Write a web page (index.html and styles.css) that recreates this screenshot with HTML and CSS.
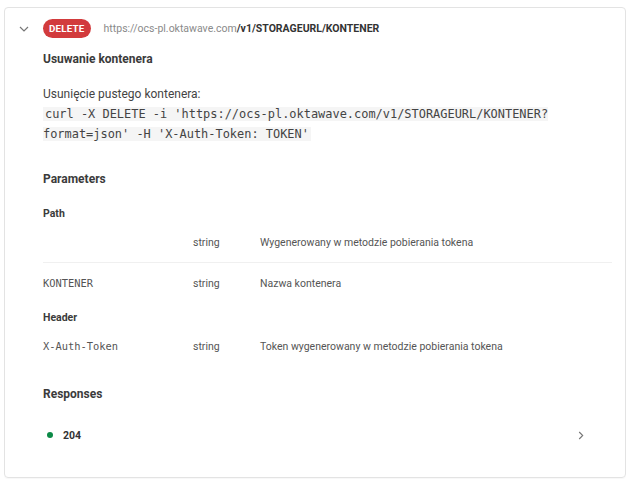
FILE: index.html
```html
<!DOCTYPE html>
<html>
<head>
<meta charset="utf-8">
<link rel="stylesheet" href="styles.css">
</head>
<body>
<div class="card">
  <div class="head">
    <svg class="chev-down" width="10" height="6" viewBox="0 0 10 6"><path d="M1 1l4 4 4-4" fill="none" stroke="#777" stroke-width="1.2"/></svg>
    <span class="badge">DELETE</span>
    <span class="url"><span class="host">https://ocs-pl.oktawave.com</span><span class="path">/v1/STORAGEURL/KONTENER</span></span>
  </div>
  <div class="body">
    <div class="title">Usuwanie kontenera</div>
    <div class="desc">
      <p class="lead">Usunięcie pustego kontenera:</p>
      <code class="code">curl -X DELETE -i 'https://ocs-pl.oktawave.com/v1/STORAGEURL/KONTENER?<br>format=json' -H 'X-Auth-Token: TOKEN'</code>
    </div>
    <h3 class="section">Parameters</h3>
    <div class="group">Path</div>
    <div class="row sep"><span class="name"></span><span class="type">string</span><span class="pdesc">Wygenerowany w metodzie pobierania tokena</span></div>
    <div class="row after-sep"><span class="name">KONTENER</span><span class="type">string</span><span class="pdesc">Nazwa kontenera</span></div>
    <div class="group hdr">Header</div>
    <div class="row"><span class="name">X-Auth-Token</span><span class="type">string</span><span class="pdesc">Token wygenerowany w metodzie pobierania tokena</span></div>
    <h3 class="section resp">Responses</h3>
    <div class="response">
      <span class="dot"></span><span class="code-num">204</span>
      <svg class="chev-right" width="6" height="9" viewBox="0 0 6 9"><path d="M1.2 1l3.5 3.5-3.5 3.5" fill="none" stroke="#777" stroke-width="1.1"/></svg>
    </div>
  </div>
</div>
</body>
</html>
```

FILE: styles.css
```css
html, body { margin: 0; padding: 0; background: #fff; }
body { font-family: Roboto, "Noto Sans", sans-serif; color: #333; padding: 7px 5px 5px 4px; }
.card {
  border: 1px solid #e3e3e3;
  border-radius: 4px;
  height: 471px;
  box-sizing: border-box;
  box-shadow: 0 1px 1px rgba(0,0,0,0.03);
}
.head {
  display: flex;
  align-items: center;
  height: 40px;
  padding: 0 0 0 14px;
}
.chev-down { margin-right: 15px; margin-top: 1px; }
.badge {
  background: #d23b3d;
  color: #fff;
  font-weight: 700;
  font-size: 9.8px;
  letter-spacing: 0.2px;
  border-radius: 10px;
  padding: 0 6px;
  height: 19px;
  line-height: 19px;
  margin-right: 13px;
  margin-left: -1px;
}
.url { font-size: 10.5px; }
.host { color: #8a8a8a; }
.path { color: #333; font-weight: 700; }
.body { padding: 0 13px 0 38px; }
.title { font-weight: 700; font-size: 12px; color: #3b3b3b; margin-top: 2px; line-height: 18px; }
.desc { margin-top: 17px; }
.lead { margin: 0; font-size: 12px; color: #444; line-height: 18px; }
.code {
  display: inline;
  font-family: "DejaVu Sans Mono", monospace;
  font-size: 11.95px;
  line-height: 18px;
  background: #f5f5f5;
  color: #444;
  padding: 0 2px;
}
.section { font-size: 12px; font-weight: 700; color: #3b3b3b; margin: 27px 0 0; line-height: 18px; }
.group { font-size: 10.5px; font-weight: 700; color: #3b3b3b; margin-top: 18px; margin-bottom: 1px; line-height: 16px; }
.group.hdr { margin-top: 8px; }
.row {
  display: flex;
  align-items: center;
  height: 38px;
  font-size: 10.5px;
  color: #555;
}
.row.sep { height: 38px; padding-bottom: 1px; border-bottom: 1px solid #f0f0f0; }
.row.after-sep { margin-top: 1px; }
.name { width: 150px; font-family: "DejaVu Sans Mono", monospace; font-size: 10.4px; color: #555; }
.type { width: 67px; }
.pdesc { color: #555; }
.section.resp { margin-top: 20px; }
.response { display: flex; align-items: center; height: 40px; margin-top: 12px; padding-left: 4px; }
.dot { width: 6px; height: 6px; border-radius: 50%; background: #0c8a47; margin-right: 10px; }
.code-num { font-size: 10.5px; font-weight: 700; color: #333; flex: 1; }
.chev-right { margin-right: 28px; }
```
